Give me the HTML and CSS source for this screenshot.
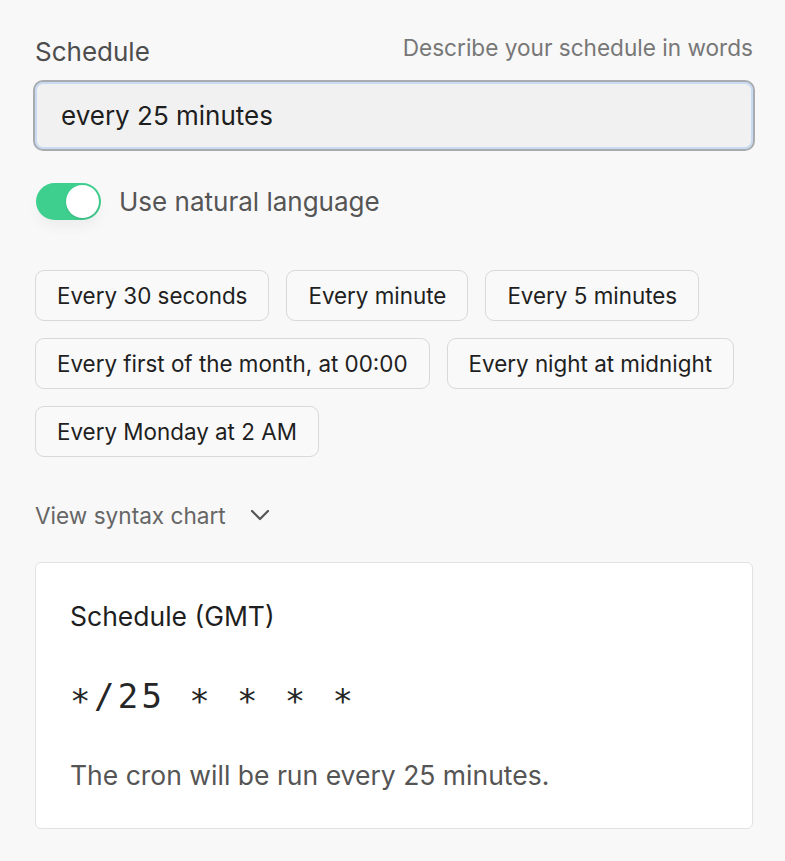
FILE: index.html
```html
<!DOCTYPE html>
<html>
<head>
<meta charset="utf-8">
<link rel="stylesheet" href="styles.css">
</head>
<body>
<div class="panel">
  <div class="head">
    <span class="label">Schedule</span>
    <span class="hint">Describe your schedule in words</span>
  </div>
  <div class="input">every 25 minutes</div>
  <div class="toggle-row">
    <span class="toggle"><span class="knob"></span></span>
    <span class="toggle-label">Use natural language</span>
  </div>
  <div class="chips">
    <span class="chip">Every 30 seconds</span>
    <span class="chip">Every minute</span>
    <span class="chip">Every 5 minutes</span>
    <span class="chip">Every first of the month, at 00:00</span>
    <span class="chip">Every night at midnight</span>
    <span class="chip">Every Monday at 2 AM</span>
  </div>
  <div class="syntax">
    <span>View syntax chart</span>
    <svg class="chev" width="20" height="14" viewBox="0 0 20 14"><path d="M2 3 L10 11 L18 3" fill="none" stroke="#555" stroke-width="2.2" stroke-linecap="round" stroke-linejoin="round"/></svg>
  </div>
  <div class="card">
    <div class="card-title">Schedule (GMT)</div>
    <div class="cron"><span class="star">*</span>/25 <span class="star">*</span> <span class="star">*</span> <span class="star">*</span> <span class="star">*</span></div>
    <div class="card-desc">The cron will be run every 25 minutes.</div>
  </div>
</div>
</body>
</html>
```
FILE: styles.css
```css
html, body {
  margin: 0;
  padding: 0;
  background: #f8f8f8;
}
body {
  font-family: "Inter", "Liberation Sans", sans-serif;
}
.panel {
  width: 718px;
  padding: 34px 0 0 35px;
  display: flex;
  flex-direction: column;
}
.head {
  display: flex;
  justify-content: space-between;
  align-items: flex-start;
  height: 44px;
}
.label {
  font-size: 26px;
  line-height: 32px;
  margin-top: 2px;
  color: #4d4d4d;
}
.hint {
  font-size: 22.6px;
  line-height: 28px;
  color: #777;
}
.input {
  margin: 2px -2px 0 -2px;
  box-sizing: border-box;
  height: 71px;
  border: 2px solid #a8acb1;
  box-shadow: inset 0 0 0 2px #c9dbf2;
  border-radius: 10px;
  background: #f1f1f1;
  display: flex;
  align-items: center;
  padding-left: 26px;
  font-size: 26px;
  color: #1e1e1e;
}
.toggle-row {
  display: flex;
  align-items: center;
  margin-top: 32px;
  gap: 18px;
  height: 37px;
}
.toggle {
  width: 65px;
  height: 37px;
  border-radius: 19px;
  background: #3ecf8e;
  display: flex;
  align-items: center;
  justify-content: flex-end;
  padding-right: 2px;
  box-sizing: border-box;
  margin-left: 1px;
  box-shadow: 0 8px 12px rgba(0,0,0,0.04);
}
.knob {
  width: 33px;
  height: 33px;
  border-radius: 50%;
  background: #fff;
  box-shadow: 0 1px 2px rgba(0,0,0,0.15);
}
.toggle-label {
  font-size: 26px;
  color: #555;
}
.chips {
  display: flex;
  flex-wrap: wrap;
  gap: 17px;
  margin-top: 50px;
}
.chip {
  height: 51px;
  box-sizing: border-box;
  border: 1.5px solid #d9d9d9;
  border-radius: 9px;
  padding: 0 21px;
  display: flex;
  align-items: center;
  font-size: 22.4px;
  color: #1f1f1f;
  background: #f9f9f9;
}
.syntax {
  display: flex;
  align-items: center;
  gap: 24px;
  margin-top: 43px;
  font-size: 22.6px;
  color: #666;
  height: 30px;
}
.card {
  margin-top: 32px;
  background: #fff;
  border: 1.5px solid #e2e2e2;
  border-radius: 6px;
  padding: 37px 34px 0 34px;
  height: 267px;
  box-sizing: border-box;
}
.card-title {
  font-size: 26.5px;
  line-height: 32px;
  color: #1e1e1e;
}
.cron {
  font-family: "DejaVu Sans Mono", monospace;
  font-size: 34px;
  letter-spacing: 3.4px;
  line-height: 46px;
  color: #262626;
  margin-top: 41px;
}
.star {
  display: inline-block;
  transform: translateY(5px);
}
.card-desc {
  margin-top: 40px;
  font-size: 26.5px;
  line-height: 32px;
  color: #555;
}
```
